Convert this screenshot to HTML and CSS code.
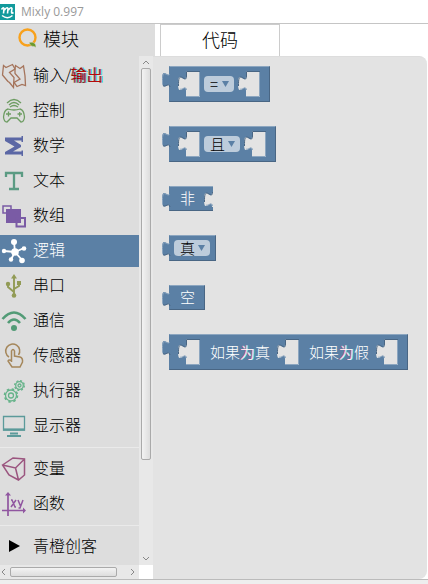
FILE: index.html
```html
<!DOCTYPE html>
<html lang="zh-CN">
<head>
<meta charset="utf-8">
<title>Mixly 0.997</title>
<link rel="stylesheet" href="styles.css">
</head>
<body>
<svg class="defs" aria-hidden="true">
  <symbol id="tab" viewBox="0 0 10 17">
    <path d="M10 17H9C9 7 1 24 1 8.500C1 -6 9 10 9 1H10Z" fill="#5b80a5"/>
    <path d="M1.500 13V8.500C1.500 -3 7 7 8.500 3" fill="none" stroke="#8ca6c0"/>
    <path d="M2 14.500C4 17 8 11 9 16" fill="none" stroke="#496684"/>
  </symbol>
  <symbol id="socket" viewBox="0 0 22 26">
    <path d="M8 0H22V26H8V20C8 10 0 28 0 12.500C0 -3 8 15 8 5Z" fill="#e3e3e3"/>
    <path d="M21.500 0V25.500H8M2 18C4 19.500 8 14 8.500 19" fill="none" stroke="#8ca6c0"/>
    <path d="M22 .5H8.500V5C8.500 14 .5 -2 .5 12.500V15" fill="none" stroke="#496684"/>
  </symbol>
</svg>

<header class="titlebar">
  <svg class="logo" viewBox="0 0 16 16"><path d="M0 0H15V16H0Z" fill="#129a9c"/><path d="M1.500 5.500Q3 3 4 4.500L3.500 9.500M4.500 6Q7 2.500 8 4.500L7.500 9.500M8.500 6Q11 2.500 12 4.500L11.500 8Q11.500 10 13.500 8.500" fill="none" stroke="#fff" stroke-width="1.600"/><path d="M2 11.500Q7.500 16 12.500 11.500" fill="none" stroke="#fff" stroke-width="1.500"/></svg>
  <h1>Mixly 0.997</h1>
</header>

<div class="tabs">
  <button class="tab-blocks" type="button">
    <svg class="orange" viewBox="0 0 20 20"><circle cx="9.500" cy="9.500" r="8" fill="none" stroke="#f8a11c" stroke-width="2.400"/><path d="M11 14.500C14 14 18 14 18 19.500L16 18.500C12.500 18.500 12 16.500 11 14.500Z" fill="#6c9a2c" stroke="#ddd" stroke-width=".5"/></svg>
    模块
  </button>
  <button class="tab-code" type="button">代码</button>
</div>

<main class="main">
  <div class="sidebar">
    <div class="sidebar-body">
      <nav class="toolbox">
        <a class="item" href="#io"><svg class="c-io" viewBox="0 0 28 28"><path d="M8 19.500L2.500 13 3.500 3.500 6 5.500 12.500 2.500 15 7 9.500 10.500 14 15.500 13.500 25.500 9.500 20.500Z"/><path d="M15 7L15.500 3.500 20 6.500 23.500 4 25 14 25.500 23.500 22 22.500 17 24.500 14 20.500 20 17 15 11.500Z"/></svg><span>输入/<span class="fringe">输出</span></span></a>
        <a class="item" href="#control"><svg class="c-control" viewBox="0 0 28 28"><path d="M7 6Q14-1 21 6M9 8Q14 3 19 8M10 10Q14 7 18 10M8 12Q14 14 20 12Q24 13 24.500 20Q24 25 21 25L17 21H11L7 25Q4 25 3.500 20Q4 13 8 12ZM6 17H11M8.500 14.500V19.500M17.500 17H22M19.700 15V19.500"/></svg>控制</a>
        <a class="item" href="#math"><svg class="c-math" viewBox="0 0 28 28"><path d="M5 5.500H21.500V4H23V10H21.500V8.500H14L21 13V15L13 19.500H21.500V18.500H23V24H21.500V22.500H5V20L14.500 14.500 5 9Z" fill="#5b67a5" stroke="none"/></svg>数学</a>
        <a class="item" href="#text"><svg class="c-text" viewBox="0 0 28 28"><path d="M6 10V6H22V10M14 6V22M9 22H19" stroke-width="2.300"/></svg>文本</a>
        <a class="item" href="#array"><svg class="c-array" viewBox="0 0 28 28"><path d="M3 4H11V11H3Z" stroke-width="1.500"/><path d="M6 7H21V21H6Z" fill="#7a5ba5" stroke="none"/><path d="M16.500 16H25V24.500H16.500Z" stroke-width="2"/></svg>数组</a>
        <a class="item selected" href="#logic"><svg viewBox="0 0 28 28"><path d="M14 5L15 15M4 14L15 15 24 11M15 15L11 22.500M15 15L22 23" stroke="#fff" stroke-width="1.800"/><g fill="#fff" stroke="none"><circle cx="15" cy="15" r="3.800"/><circle cx="14" cy="5" r="3"/><circle cx="4" cy="14" r="2.200"/><circle cx="24" cy="11.500" r="2.300"/><circle cx="11" cy="22.500" r="2.200"/><circle cx="22" cy="23.500" r="2.800"/></g></svg>逻辑</a>
        <a class="item" href="#serial"><svg class="c-serial" viewBox="0 0 28 28"><path d="M14 5V24M8 11V15L14 20M19 11V14L14 17" stroke-width="1.900"/><g fill="#929b56" stroke="none"><path d="M11 6.500L14 2 17 6.500ZM17 9H21V13H17Z"/><circle cx="8" cy="12" r="2.200"/><circle cx="14" cy="23.500" r="2.300"/></g></svg>串口</a>
        <a class="item" href="#comm"><svg class="c-comm" viewBox="0 0 28 28"><path d="M2.500 12Q14 -1 25.500 12M8 16Q14 9 20 16" stroke-width="2.600"/><circle cx="14" cy="21" r="3" fill="#529b76" stroke="none"/></svg>通信</a>
        <a class="item" href="#sensor"><svg class="c-sensor" viewBox="0 0 28 28"><path d="M9 15A7 7 0 1 1 18.500 13M11.500 20V9Q13 6 14.500 9V14L20 15Q23 16 22.500 20L20 25H12L8 19Q9 17 11.500 19" stroke-width="1.500"/></svg>传感器</a>
        <a class="item" href="#actuator"><svg class="c-actuator" viewBox="0 0 28 28"><circle cx="11" cy="18.500" r="5.500"/><circle cx="11" cy="18.500" r="6.500" stroke-dasharray="2.500 2.600" stroke-width="1.600"/><circle cx="11" cy="18.500" r="2.500"/><circle cx="19.500" cy="8.500" r="3.800"/><circle cx="19.500" cy="8.500" r="4.800" stroke-dasharray="2 1.770" stroke-width="1.400"/><circle cx="19.500" cy="8.500" r="1.500"/></svg>执行器</a>
        <a class="item" href="#display"><svg class="c-display" viewBox="0 0 28 28"><path d="M3.500 4.500H24.500V18H3.500Z"/><path d="M3 17.500H25" stroke-width="2.200"/><path d="M10 21.500H18M7 24H21" stroke-width="1.800"/></svg>显示器</a>
        <hr>
        <a class="item" href="#variable"><svg class="c-variable" viewBox="0 0 28 28"><path d="M2.500 10L13 3 24.500 4 24.500 20 18.500 25 9 20ZM2.500 10L15.500 13 24.500 4M15.500 13L18.500 25" stroke-width="1.500"/></svg>变量</a>
        <a class="item" href="#function"><svg class="c-function" viewBox="0 0 28 28"><path d="M8 4V26M2 20.500H24" stroke-width="1.700"/><path d="M5 5.500L8 2 11 5.500ZM23 17.500L26 20.500 23 23.500Z" fill="#9056a0" stroke="none"/><path d="M11 10H12L15 17H16M16 10L11 17M18 10L20.500 16M23 10L20 18H18.500" stroke-width="1.500"/></svg>函数</a>
        <hr>
        <a class="item" href="#orange"><svg viewBox="0 0 28 28"><path d="M9 7L20 13 9 19Z" fill="#000" stroke="none"/></svg>青橙创客</a>
      </nav>
      <div class="bar-y" aria-hidden="true">
        <svg viewBox="0 0 8 6"><path d="M1 5L4 2 7 5"/></svg>
        <div class="thumb-y"></div>
        <svg class="end" viewBox="0 0 8 6"><path d="M1 1L4 4 7 1"/></svg>
      </div>
    </div>
    <div class="sidebar-foot" aria-hidden="true">
      <div class="bar-x">
        <svg viewBox="0 0 6 8"><path d="M4 1L1 4 4 7"/></svg>
        <div class="thumb-x"></div>
        <svg class="end" viewBox="0 0 6 8"><path d="M1 1L4 4 1 7"/></svg>
      </div>
    </div>
  </div>

  <section class="workspace">
    <div class="block tall">
      <svg class="tab"><use href="#tab"/></svg>
      <svg class="socket"><use href="#socket"/></svg>
      <span class="pick narrow"><select aria-label="比较"><option>=</option></select><svg class="arrow" viewBox="0 0 8 7"><path d="M0 0H7L3.500 6Z"/></svg></span>
      <svg class="socket"><use href="#socket"/></svg>
    </div>
    <div class="block tall">
      <svg class="tab"><use href="#tab"/></svg>
      <svg class="socket"><use href="#socket"/></svg>
      <span class="pick"><select aria-label="逻辑运算"><option>且</option></select><svg class="arrow" viewBox="0 0 8 7"><path d="M0 0H7L3.500 6Z"/></svg></span>
      <svg class="socket"><use href="#socket"/></svg>
    </div>
    <div class="block label notched">
      <svg class="tab"><use href="#tab"/></svg>
      非
      <svg class="notch" viewBox="0 0 9 26"><path d="M9 20H8C8 10 0 28 0 12.500C0 -3 8 15 8 5H9Z" fill="#e3e3e3"/><path d="M8.500 5C8.500 14 .5 -2 .5 12.500V15" fill="none" stroke="#496684"/><path d="M2 18C4 19.500 8 14 8.500 19" fill="none" stroke="#8ca6c0"/></svg>
    </div>
    <div class="block">
      <svg class="tab"><use href="#tab"/></svg>
      <span class="pick"><select aria-label="真假"><option>真</option></select><svg class="arrow" viewBox="0 0 8 7"><path d="M0 0H7L3.500 6Z"/></svg></span>
    </div>
    <div class="block label">
      <svg class="tab"><use href="#tab"/></svg>
      空
    </div>
    <div class="block tall">
      <svg class="tab"><use href="#tab"/></svg>
      <svg class="socket"><use href="#socket"/></svg>
      <span class="words">如果<span class="fringe-light">为</span>真</span>
      <svg class="socket"><use href="#socket"/></svg>
      <span class="words">如果<span class="fringe-light">为</span>假</span>
      <svg class="socket"><use href="#socket"/></svg>
    </div>
  </section>
</main>
<footer class="statusbar"></footer>
</body>
</html>
```
FILE: styles.css
```css
* { box-sizing: border-box; }

body {
  margin: 0;
  min-height: 100vh;
  display: flex;
  flex-direction: column;
  background: #fff;
  color: #000;
  font: 300 16px "Noto Sans CJK SC", sans-serif;
}

svg { display: block; flex: none; }
.defs { position: absolute; width: 0; height: 0; }
button, select { font: inherit; color: inherit; border: 0; padding: 0; margin: 0; }

.titlebar {
  display: flex;
  align-items: center;
  gap: 5px;
  height: 24px;
  border-bottom: 1px solid #c5c5c5;
}
.logo { width: 16px; height: 16px; }
.titlebar h1 {
  margin: 0;
  font: 400 12px/16px "Open Sans", sans-serif;
  color: #999;
}

.tabs { display: flex; height: 32px; }
.tabs button { font-size: 18px; line-height: 28px; padding-bottom: 4px; }
.tab-blocks {
  display: flex;
  align-items: center;
  gap: 5px;
  width: 155px;
  margin-right: 5px;
  background: #ddd;
}
.tabs .tab-blocks { padding-left: 18px; }
.orange { width: 20px; height: 20px; }
.tab-code {
  width: 120px;
  background: #fff;
}
.tabs .tab-code { border: solid #ccc; border-width: 1px 1px 0; }

.main { flex: 1; display: flex; }

.sidebar { width: 153px; display: flex; flex-direction: column; }
.sidebar-body { flex: 1; display: flex; }
.toolbox {
  flex: 1;
  display: flex;
  flex-direction: column;
  gap: 3px;
  padding: 4px 0 2px;
  background: #ddd;
}
.item {
  display: flex;
  align-items: flex-start;
  gap: 5px;
  height: 32px;
  line-height: 29px;
  color: inherit;
  text-decoration: none;
  white-space: nowrap;
}
.item svg { width: 28px; height: 28px; margin-top: 2px; fill: none; stroke-width: 1.3; }
.item.selected { background: #5b80a5; color: #fff; }
.toolbox hr {
  width: 100%;
  height: 1px;
  margin: 2px 0;
  border: 0;
  background: #eaeaea;
}
.c-io { stroke: #a5745b; }
.c-control { stroke: #6d9c62; }
.c-math { stroke: #5b67a5; }
.c-text { stroke: #5b9b83; }
.c-array { stroke: #7a5ba5; }
.c-serial { stroke: #929b56; }
.c-comm { stroke: #529b76; }
.c-sensor { stroke: #a5875b; }
.c-actuator { stroke: #66b38a; }
.c-display { stroke: #5b9a9a; }
.c-variable { stroke: #9b557f; }
.c-function { stroke: #9056a0; }
.fringe { color: #c80000; text-shadow: -1px 0 #500000, 1px 0 #00e0e0; }

.bar-y {
  width: 14px;
  display: flex;
  flex-direction: column;
  align-items: center;
  padding: 3px 0;
  background: #e8e8e8;
}
.bar-y svg { width: 8px; height: 6px; fill: none; stroke: #888; }
.bar-x svg { width: 6px; height: 8px; fill: none; stroke: #888; }
.thumb-y {
  width: 10px;
  height: 78%;
  margin-top: 3px;
  border: 1px solid #aaa;
  border-radius: 2px;
  background: linear-gradient(90deg, #f3f3f3, #ddd);
}
.bar-y .end { margin-top: auto; }
.sidebar-foot { padding-right: 14px; }
.bar-x {
  display: flex;
  align-items: center;
  height: 14px;
  padding: 0 3px 0 1px;
  background: #e8e8e8;
}
.thumb-x {
  width: 107px;
  height: 10px;
  margin-left: 3px;
  border: 1px solid #aaa;
  border-radius: 2px;
  background: linear-gradient(#f3f3f3, #ddd);
}
.bar-x .end { margin-left: auto; }

.workspace {
  flex: 1;
  display: flex;
  flex-direction: column;
  align-items: flex-start;
  gap: 24px;
  margin-right: 1px;
  padding: 9px 0 0 16px;
  border-top: 1px solid #ddd;
  border-radius: 0 8px 8px 0;
  background: #e3e3e3;
}
.block {
  position: relative;
  display: flex;
  align-items: center;
  height: 26px;
  padding: 0 5px 0 4px;
  background: #5b80a5;
  border: solid;
  border-width: 1px;
  border-color: #8ca6c0 #496684 #496684 #5b80a5;
  color: #fff;
  font-size: 15px;
  line-height: 20px;
}
.block.tall { height: 36px; padding: 0 9px 0 8px; gap: 4px; }
.block.label { height: 25px; padding: 0 9px 2px 10px; }
.block.notched { padding-right: 18px; border-right: 0; }
.block .tab { position: absolute; left: -9px; top: 4px; width: 10px; height: 17px; }
.block .notch { position: absolute; right: 0; top: 0; width: 9px; height: 26px; }
.socket { width: 22px; height: 26px; }
.words { margin: 0 3px 0 6px; white-space: nowrap; }
.fringe-light { text-shadow: -1px 0 #ff5b80, 1px 0 #3be6ee; }

.pick { position: relative; color: #000; }
.pick select {
  display: block;
  width: 36px;
  height: 16px;
  padding: 0 0 0 6px;
  line-height: 16px;
  border-radius: 4px;
  background: #bdccdb;
  appearance: none;
}
.pick.narrow select { width: 30px; }
.pick .arrow {
  position: absolute;
  right: 4px;
  top: 5px;
  width: 8px;
  height: 7px;
  fill: #5b80a5;
  pointer-events: none;
}

.statusbar { height: 5px; border-top: 1px solid #bbb; background: #eee; }
```
